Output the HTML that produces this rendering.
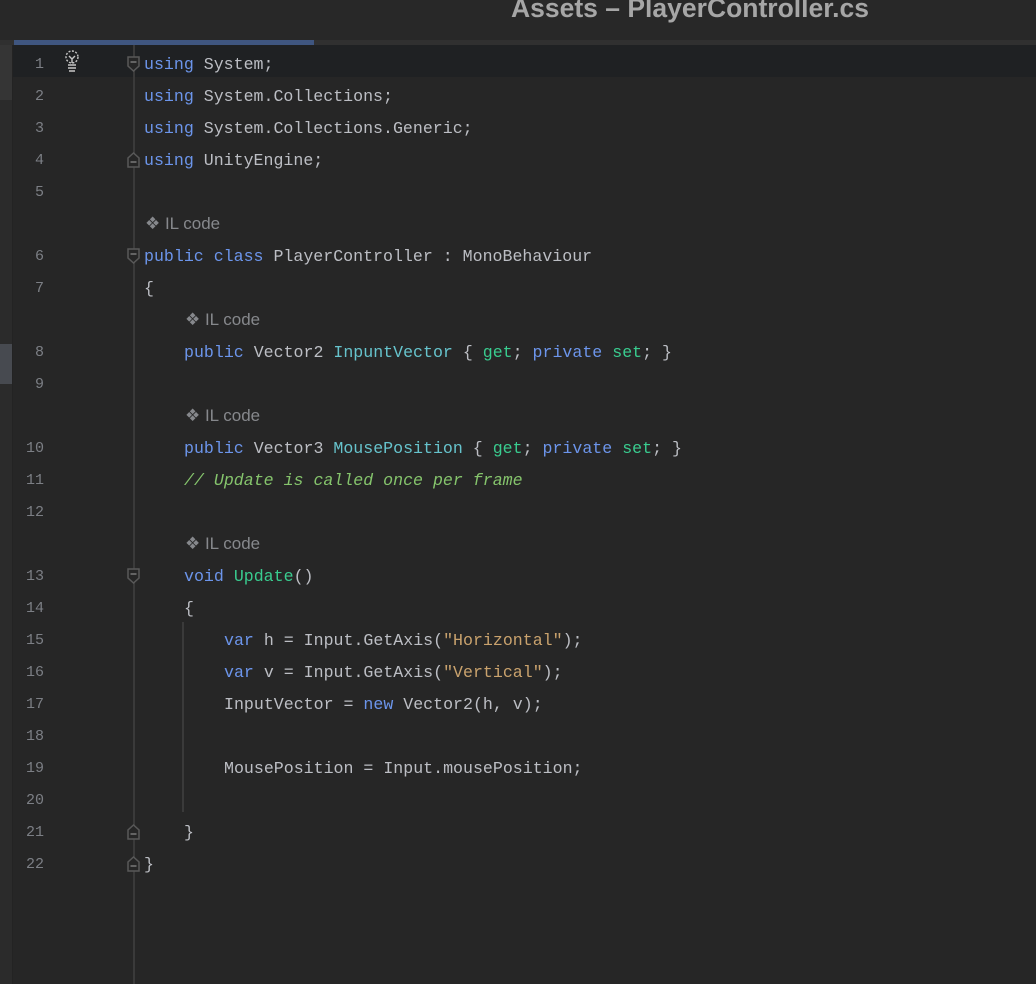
<!DOCTYPE html>
<html><head><meta charset="utf-8"><style>
body{margin:0;width:1036px;height:984px;background:#262626;overflow:hidden;position:relative;font-family:"Liberation Mono",monospace;}
#title{position:absolute;left:0;top:0;width:1036px;height:40px;background:#282828;}
#title span{position:absolute;left:511px;top:-7px;font:bold 26.5px "Liberation Sans",sans-serif;color:#a6a6a6;white-space:nowrap;}
#sep{position:absolute;left:0;top:40px;width:1036px;height:5px;background:#303030;}
#tab{position:absolute;left:14px;top:40px;width:300px;height:5px;background:#3f5680;}
#strip{position:absolute;left:0;top:45px;width:12px;height:939px;background:#2b2b2b;border-right:1px solid #232323;}
.mk{position:absolute;left:0;width:12px;}
#hl{position:absolute;left:13px;top:45px;width:1023px;height:32px;background:#1f2123;}
#gl{position:absolute;left:133px;top:45px;width:2px;height:939px;background:#3a3a3a;}
#ig{position:absolute;left:182px;top:622px;width:2px;height:190px;background:#3a3a3a;}
.r{position:absolute;height:32px;line-height:32px;font-size:16.6px;color:#bcbec4;white-space:pre;margin-top:1px;}
.n{position:absolute;left:13px;width:31px;text-align:right;height:32px;line-height:32px;font-size:15px;color:#7c7f85;margin-top:1px;}
.k{color:#6c95eb}.g{color:#39cc8f}.c{color:#66c3cc}.s{color:#c9a26d}.cm{color:#85c46c;font-style:italic}
.il{position:absolute;height:32px;line-height:32px;font:17px "Liberation Sans",sans-serif;color:#86888c;margin-top:6px;}
</style></head><body>
<div id="title"><span>Assets – PlayerController.cs</span></div>
<div id="sep"></div><div id="tab"></div>
<div id="strip"><div class="mk" style="top:0;height:55px;background:#353535"></div><div class="mk" style="top:299px;height:40px;background:#474a50"></div></div>
<div id="hl"></div>
<div id="gl"></div><div id="ig"></div>
<svg style="position:absolute;left:62px;top:49px" width="20" height="26" viewBox="0 0 20 26" fill="none" stroke="#c8c8c8" stroke-width="1.4"><circle cx="10" cy="8" r="6" stroke-dasharray="2 1.5"/><path d="M7 7l3 3 3-3M10 10v4M6 16h8M6 19h8M7 22h6"/></svg>
<svg style="position:absolute;left:0;top:0" width="1036" height="984">
<g fill="#262626" stroke="#585858" stroke-width="1.5">
<path d="M128 57h11v9l-5.5 5-5.5-5z"/><path d="M128 249h11v9l-5.5 5-5.5-5z"/><path d="M128 569h11v9l-5.5 5-5.5-5z"/>
<path d="M128 167h11v-9l-5.5-5-5.5 5z"/><path d="M128 839h11v-9l-5.5-5-5.5 5z"/><path d="M128 871h11v-9l-5.5-5-5.5 5z"/>
</g>
<g stroke="#8a8a8a" stroke-width="1.3"><path d="M130.5 62h6M130.5 254h6M130.5 574h6M130.5 162h6M130.5 834h6M130.5 866h6"/></g>
</svg>
<div class="n" style="top:48px">1</div><div class="r" style="left:144px;top:48px"><span class="k">using</span> System;</div>
<div class="n" style="top:80px">2</div><div class="r" style="left:144px;top:80px"><span class="k">using</span> System.Collections;</div>
<div class="n" style="top:112px">3</div><div class="r" style="left:144px;top:112px"><span class="k">using</span> System.Collections.Generic;</div>
<div class="n" style="top:144px">4</div><div class="r" style="left:144px;top:144px"><span class="k">using</span> UnityEngine;</div>
<div class="n" style="top:176px">5</div>
<div class="il" style="left:145px;top:208px">❖ IL code</div>
<div class="n" style="top:240px">6</div><div class="r" style="left:144px;top:240px"><span class="k">public class</span> PlayerController : MonoBehaviour</div>
<div class="n" style="top:272px">7</div><div class="r" style="left:144px;top:272px">{</div>
<div class="il" style="left:185px;top:304px">❖ IL code</div>
<div class="n" style="top:336px">8</div><div class="r" style="left:184px;top:336px"><span class="k">public</span> Vector2 <span class="c">InpuntVector</span> { <span class="g">get</span>; <span class="k">private</span> <span class="g">set</span>; }</div>
<div class="n" style="top:368px">9</div>
<div class="il" style="left:185px;top:400px">❖ IL code</div>
<div class="n" style="top:432px">10</div><div class="r" style="left:184px;top:432px"><span class="k">public</span> Vector3 <span class="c">MousePosition</span> { <span class="g">get</span>; <span class="k">private</span> <span class="g">set</span>; }</div>
<div class="n" style="top:464px">11</div><div class="r cm" style="left:184px;top:464px">// Update is called once per frame</div>
<div class="n" style="top:496px">12</div>
<div class="il" style="left:185px;top:528px">❖ IL code</div>
<div class="n" style="top:560px">13</div><div class="r" style="left:184px;top:560px"><span class="k">void</span> <span class="g">Update</span>()</div>
<div class="n" style="top:592px">14</div><div class="r" style="left:184px;top:592px">{</div>
<div class="n" style="top:624px">15</div><div class="r" style="left:224px;top:624px"><span class="k">var</span> h = Input.GetAxis(<span class="s">"Horizontal"</span>);</div>
<div class="n" style="top:656px">16</div><div class="r" style="left:224px;top:656px"><span class="k">var</span> v = Input.GetAxis(<span class="s">"Vertical"</span>);</div>
<div class="n" style="top:688px">17</div><div class="r" style="left:224px;top:688px">InputVector = <span class="k">new</span> Vector2(h, v);</div>
<div class="n" style="top:720px">18</div>
<div class="n" style="top:752px">19</div><div class="r" style="left:224px;top:752px">MousePosition = Input.mousePosition;</div>
<div class="n" style="top:784px">20</div>
<div class="n" style="top:816px">21</div><div class="r" style="left:184px;top:816px">}</div>
<div class="n" style="top:848px">22</div><div class="r" style="left:144px;top:848px">}</div>
</body></html>
